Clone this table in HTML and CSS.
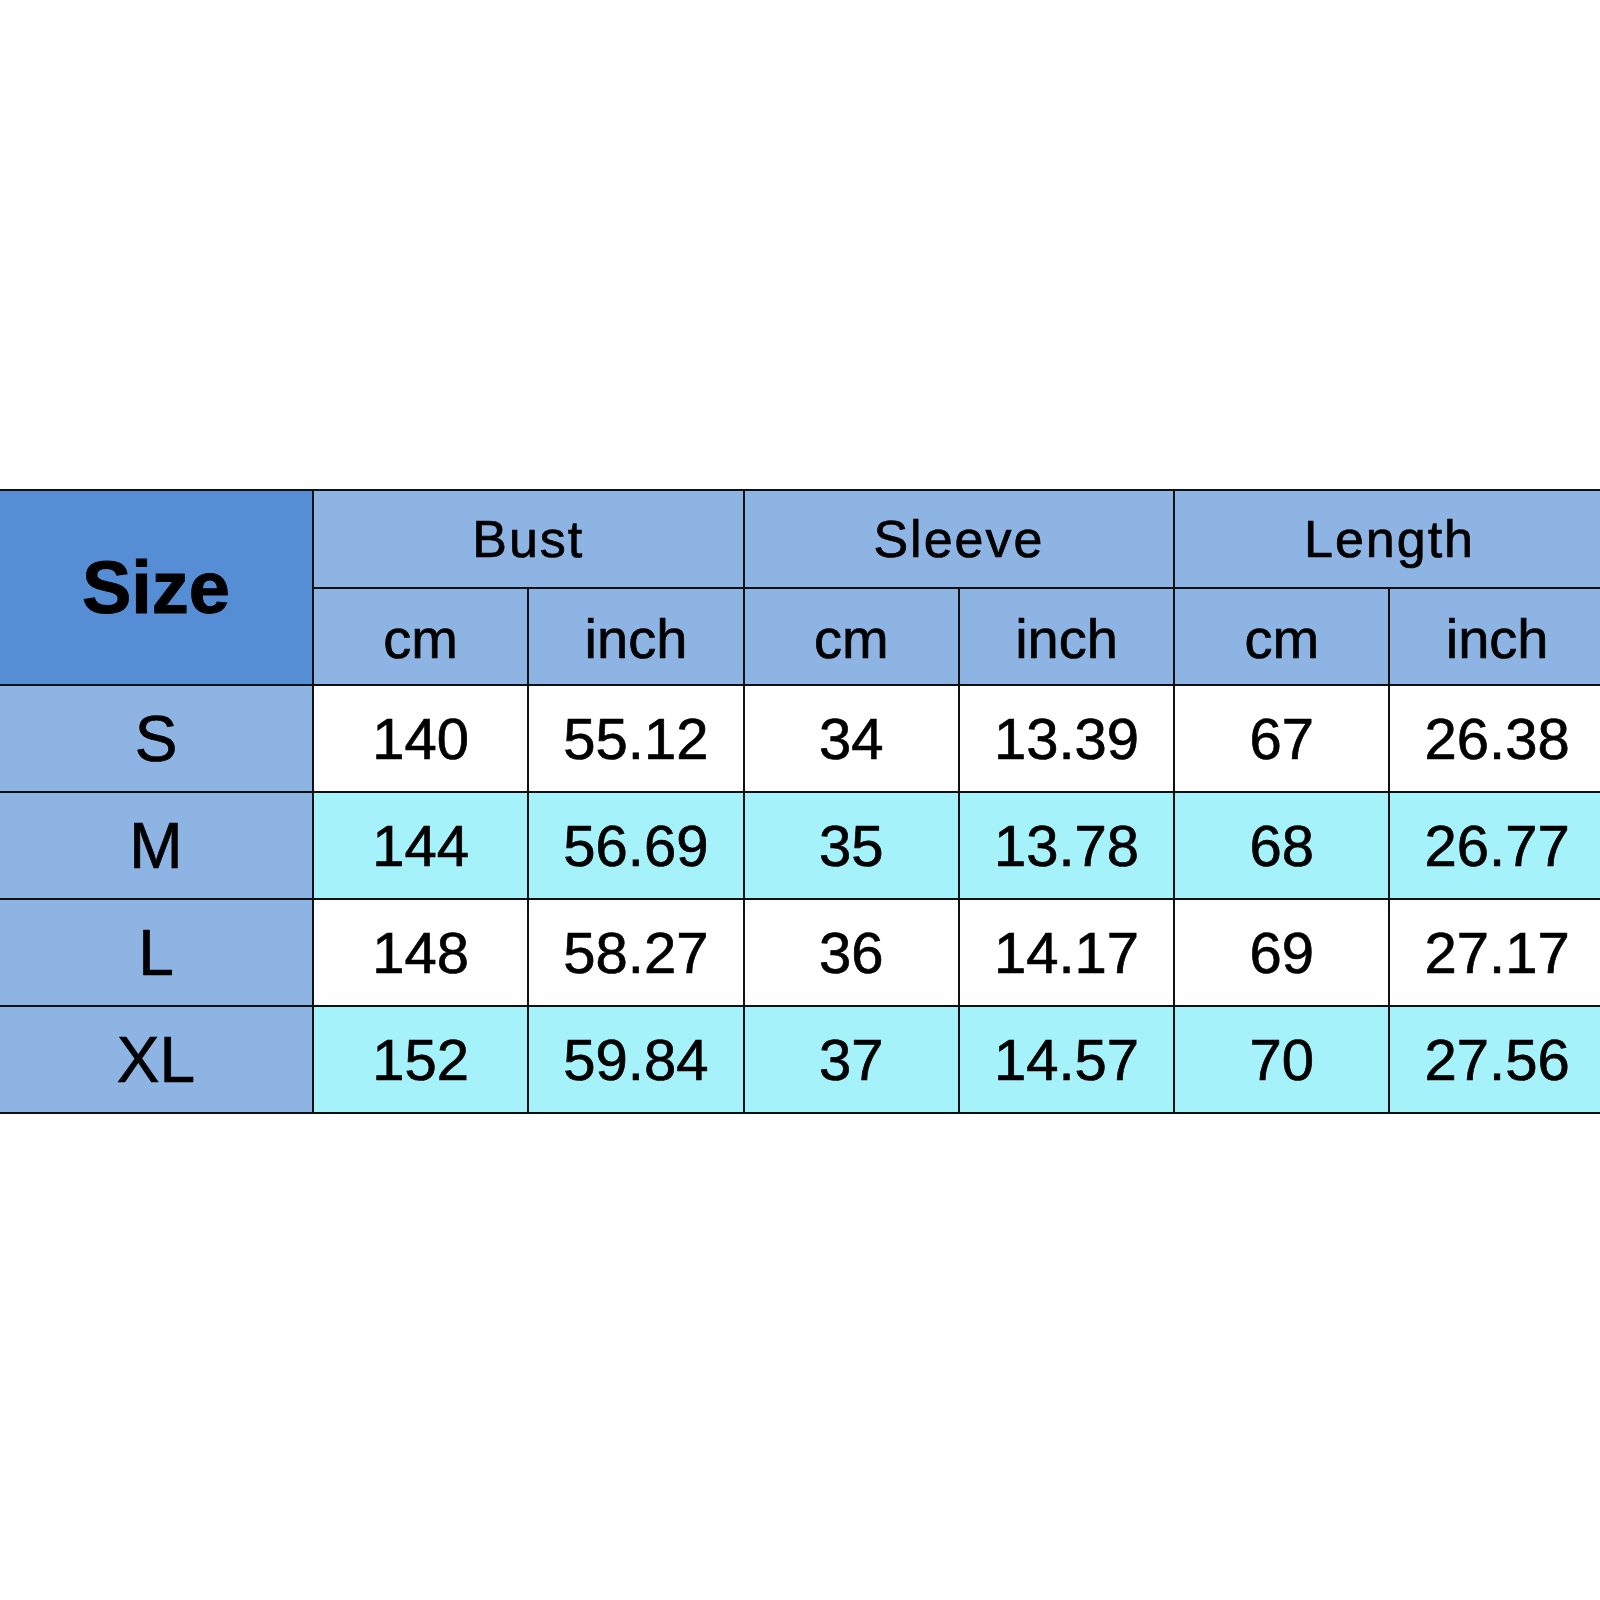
FILE: index.html
```html
<!DOCTYPE html>
<html>
<head>
<meta charset="utf-8">
<link rel="stylesheet" href="styles.css">
</head>
<body>
<div class="wrap">
<table class="chart">
  <colgroup>
    <col class="c-size">
    <col class="c-val"><col class="c-val"><col class="c-val"><col class="c-val"><col class="c-val"><col class="c-val">
  </colgroup>
  <thead>
    <tr class="h1">
      <th class="size-head" rowspan="2">Size</th>
      <th class="grp" colspan="2">Bust</th>
      <th class="grp" colspan="2">Sleeve</th>
      <th class="grp" colspan="2">Length</th>
    </tr>
    <tr class="h2">
      <th class="unit">cm</th><th class="unit">inch</th>
      <th class="unit">cm</th><th class="unit">inch</th>
      <th class="unit">cm</th><th class="unit">inch</th>
    </tr>
  </thead>
  <tbody>
    <tr class="white"><th class="lbl">S</th><td>140</td><td>55.12</td><td>34</td><td>13.39</td><td>67</td><td>26.38</td></tr>
    <tr class="cyan"><th class="lbl">M</th><td>144</td><td>56.69</td><td>35</td><td>13.78</td><td>68</td><td>26.77</td></tr>
    <tr class="white"><th class="lbl">L</th><td>148</td><td>58.27</td><td>36</td><td>14.17</td><td>69</td><td>27.17</td></tr>
    <tr class="cyan"><th class="lbl">XL</th><td>152</td><td>59.84</td><td>37</td><td>14.57</td><td>70</td><td>27.56</td></tr>
  </tbody>
</table>
</div>
</body>
</html>
```
FILE: styles.css
```css
html, body {
  margin: 0;
  padding: 0;
  background: #ffffff;
}
body {
  width: 1600px;
  height: 1600px;
  overflow: hidden;
  font-family: "Comic Sans MS", "Liberation Sans", Arial, sans-serif;
  color: #000;
}
.wrap {
  padding-top: 489px;
  margin-left: -2px;
  width: 1610px;
}
.chart {
  border-collapse: collapse;
  table-layout: fixed;
  width: 1606px;
}
.c-size { width: 314px; }
.c-val { width: 215.3px; }
.chart th, .chart td {
  border: 2px solid #111111;
  padding: 0;
  text-align: center;
  vertical-align: middle;
  font-weight: normal;
  -webkit-text-stroke: 0.7px #000;
}
.h1 { height: 98px; }
.h2 { height: 97px; }
.size-head {
  background: #558ed5;
  font-weight: bold !important;
  font-size: 74px;
  -webkit-text-stroke: 1px #000 !important;
}
.grp {
  background: #8db4e2;
  font-size: 52px;
  letter-spacing: 2px;
}
.unit {
  background: #8db4e2;
  font-size: 56px;
  padding-top: 4px !important;
}
tbody tr { height: 107px; }
.lbl {
  background: #8db4e2;
  font-size: 64px;
}
tbody td {
  font-size: 58px;
}
.white td { background: #ffffff; }
.cyan td { background: #a6f2fb; }
```
